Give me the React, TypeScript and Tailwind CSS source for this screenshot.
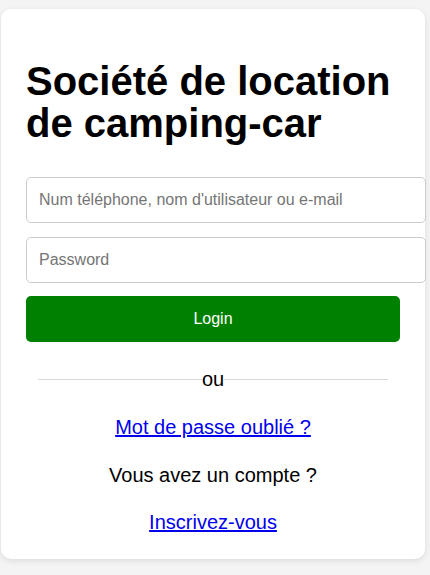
export default function App() {
  return (
    <div className="min-h-[575px] bg-[#f4f4f4] pt-[9px] font-['Liberation_Sans',Arial,sans-serif] leading-[normal] text-black">
      <div className="ml-px w-[424px] rounded-[10px] bg-white p-[25px] shadow-[0_2px_6px_rgba(0,0,0,0.1)]">
        <h1 className="mt-[26px] mb-[33px] text-[40px] leading-[42px] font-bold">
          Société de location de camping-car
        </h1>

        <input
          type="text"
          placeholder="Num téléphone, nom d'utilisateur ou e-mail"
          className="block h-[46px] w-[400px] rounded-[5px] border border-[#cccccc] px-3 text-[16px] placeholder:text-[#757575]"
        />
        <input
          type="password"
          placeholder="Password"
          className="mt-[14px] block h-[46px] w-[400px] rounded-[5px] border border-[#cccccc] px-3 text-[16px] placeholder:text-[#757575]"
        />
        <button className="mt-[13px] block h-[46px] w-full rounded-[5px] bg-[#008000] text-[16px] text-white">
          Login
        </button>

        <div className="mx-3 mt-[26px] flex items-center text-[20px]">
          <div className="h-px flex-1 bg-[#d9d9d9]" />
          <span>ou</span>
          <div className="h-px flex-1 bg-[#d9d9d9]" />
        </div>

        <div className="mt-[25px] text-center text-[20px]">
          <a href="#" className="text-[#0000ee] underline">
            Mot de passe oublié ?
          </a>
        </div>
        <p className="mt-[25px] text-center text-[20px]">Vous avez un compte ?</p>
        <div className="mt-[24px] text-center text-[20px]">
          <a href="#" className="text-[#0000ee] underline">
            Inscrivez-vous
          </a>
        </div>
      </div>
    </div>
  );
}
